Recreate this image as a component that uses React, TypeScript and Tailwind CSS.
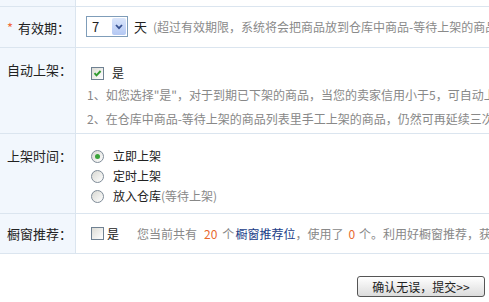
import React from 'react';

const font = { fontFamily: '"Noto Sans CJK SC", "Noto Sans", sans-serif' };

function Checkbox({ checked }: { checked?: boolean }) {
  return (
    <span className="relative inline-flex w-[13px] h-[13px] shrink-0 border border-[#6f8192] bg-gradient-to-br from-[#dcdcd6] to-[#ffffff]">
      {checked && (
        <svg viewBox="0 0 11 11" className="absolute inset-0 w-[11px] h-[11px]">
          <path d="M2.5 5.2 L4.5 7.4 L8.6 3" stroke="#2f9a2f" strokeWidth="1.9" fill="none" />
        </svg>
      )}
    </span>
  );
}

function Radio({ checked }: { checked?: boolean }) {
  return (
    <span className="relative inline-flex items-center justify-center w-[13px] h-[13px] shrink-0 rounded-full border border-[#7e8b97] bg-gradient-to-br from-[#d8d8d2] to-[#ffffff]">
      {checked && <span className="w-[5px] h-[5px] rounded-full bg-[#3aa33a]" />}
    </span>
  );
}

function Label({ children }: { children: React.ReactNode }) {
  return (
    <div className="w-[76px] shrink-0 bg-[#f2f7fd] border-r border-[#dbe5ef] pl-[7px] text-[13px] leading-[16px] text-[#222]">
      {children}
    </div>
  );
}

export default function App() {
  return (
    <div className="w-[489px] h-[302px] overflow-hidden bg-white whitespace-nowrap text-[12px] text-[#333]" style={font}>
      <div className="flex h-[7px] border-b border-[#dbe5ef]">
        <div className="w-[76px] bg-[#f2f7fd] border-r border-[#dbe5ef]" />
        <div className="flex-1" />
      </div>

      {/* 有效期 */}
      <div className="flex h-[41px] border-b border-[#dbe5ef]">
        <Label>
          <div className="pt-[13px]">
            <span className="text-[#f06a3c] mr-[5px]">*</span>有效期：
          </div>
        </Label>
        <div className="flex items-center pl-[10px] pb-[1px]">
          <div className="flex items-center w-[42px] h-[21px] border border-[#7f9db9] bg-white">
            <span className="pl-[5px] flex-1 text-[13px] leading-none text-[#222]">7</span>
            <span className="flex items-center justify-center w-[14px] h-[17px] mr-[1px] rounded-[2px] bg-gradient-to-b from-[#dbe6fb] to-[#b4c8f3]">
              <svg viewBox="0 0 8 6" className="w-[8px] h-[6px]">
                <path d="M1 1 L4 4.2 L7 1" stroke="#36508f" strokeWidth="1.8" fill="none" />
              </svg>
            </span>
          </div>
          <span className="ml-[6px] text-[13px] text-[#222]">天</span>
          <span className="ml-[6px] text-[#8a8a8a]">(超过有效期限，系统将会把商品放到仓库中商品-等待上架的商品列表中)</span>
        </div>
      </div>

      {/* 自动上架 */}
      <div className="flex h-[86px] border-b border-[#dbe5ef]">
        <Label>
          <div className="pt-[14px]">自动上架：</div>
        </Label>
        <div className="flex flex-col pl-[11px]">
          <div className="flex items-center gap-[8px] pt-[16px] pl-[4px] text-[#222]">
            <Checkbox checked />
            <span>是</span>
          </div>
          <div className="mt-[5px] leading-[16px] text-[#888]">1、如您选择"是"，对于到期已下架的商品，当您的卖家信用小于5，可自动上架三次。</div>
          <div className="mt-[8px] leading-[16px] text-[#888]">2、在仓库中商品-等待上架的商品列表里手工上架的商品，仍然可再延续三次自动上架。</div>
        </div>
      </div>

      {/* 上架时间 */}
      <div className="flex h-[80px] border-b border-[#dbe5ef]">
        <Label>
          <div className="pt-[14px]">上架时间：</div>
        </Label>
        <div className="flex flex-col gap-[4px] pt-[14px] pl-[15px] text-[#222]">
          <div className="flex items-center gap-[9px] h-[16px]">
            <Radio checked />
            <span>立即上架</span>
          </div>
          <div className="flex items-center gap-[9px] h-[16px]">
            <Radio />
            <span>定时上架</span>
          </div>
          <div className="flex items-center gap-[9px] h-[16px]">
            <Radio />
            <span>
              放入仓库<span className="text-[#888]">(等待上架)</span>
            </span>
          </div>
        </div>
      </div>

      {/* 橱窗推荐 */}
      <div className="flex h-[40px] border-b border-[#dbe5ef]">
        <Label>
          <div className="pt-[12px]">橱窗推荐：</div>
        </Label>
        <div className="flex items-center pl-[15px]">
          <Checkbox />
          <span className="ml-[3px] text-[#222]">是</span>
          <span className="ml-[18px] text-[#888]">您当前共有</span>
          <span className="ml-[7px] text-[#e8692e]">20</span>
          <span className="ml-[5px] text-[#888]">个</span>
          <span className="ml-[1px] text-[#203c87]">橱窗推荐位</span>
          <span className="text-[#888]">，使用了</span>
          <span className="ml-[5px] text-[#e8692e]">0</span>
          <span className="ml-[4px] text-[#888]">个。利用好橱窗推荐，获得更多的流量</span>
        </div>
      </div>

      <div className="flex justify-end pt-[22px] pr-[4px]">
        <button className="w-[128px] h-[21px] rounded-[3px] border border-[#555] bg-gradient-to-b from-[#ffffff] to-[#dcdcdc] text-[12px] leading-none text-[#222]">
          确认无误，提交&gt;&gt;
        </button>
      </div>
    </div>
  );
}
